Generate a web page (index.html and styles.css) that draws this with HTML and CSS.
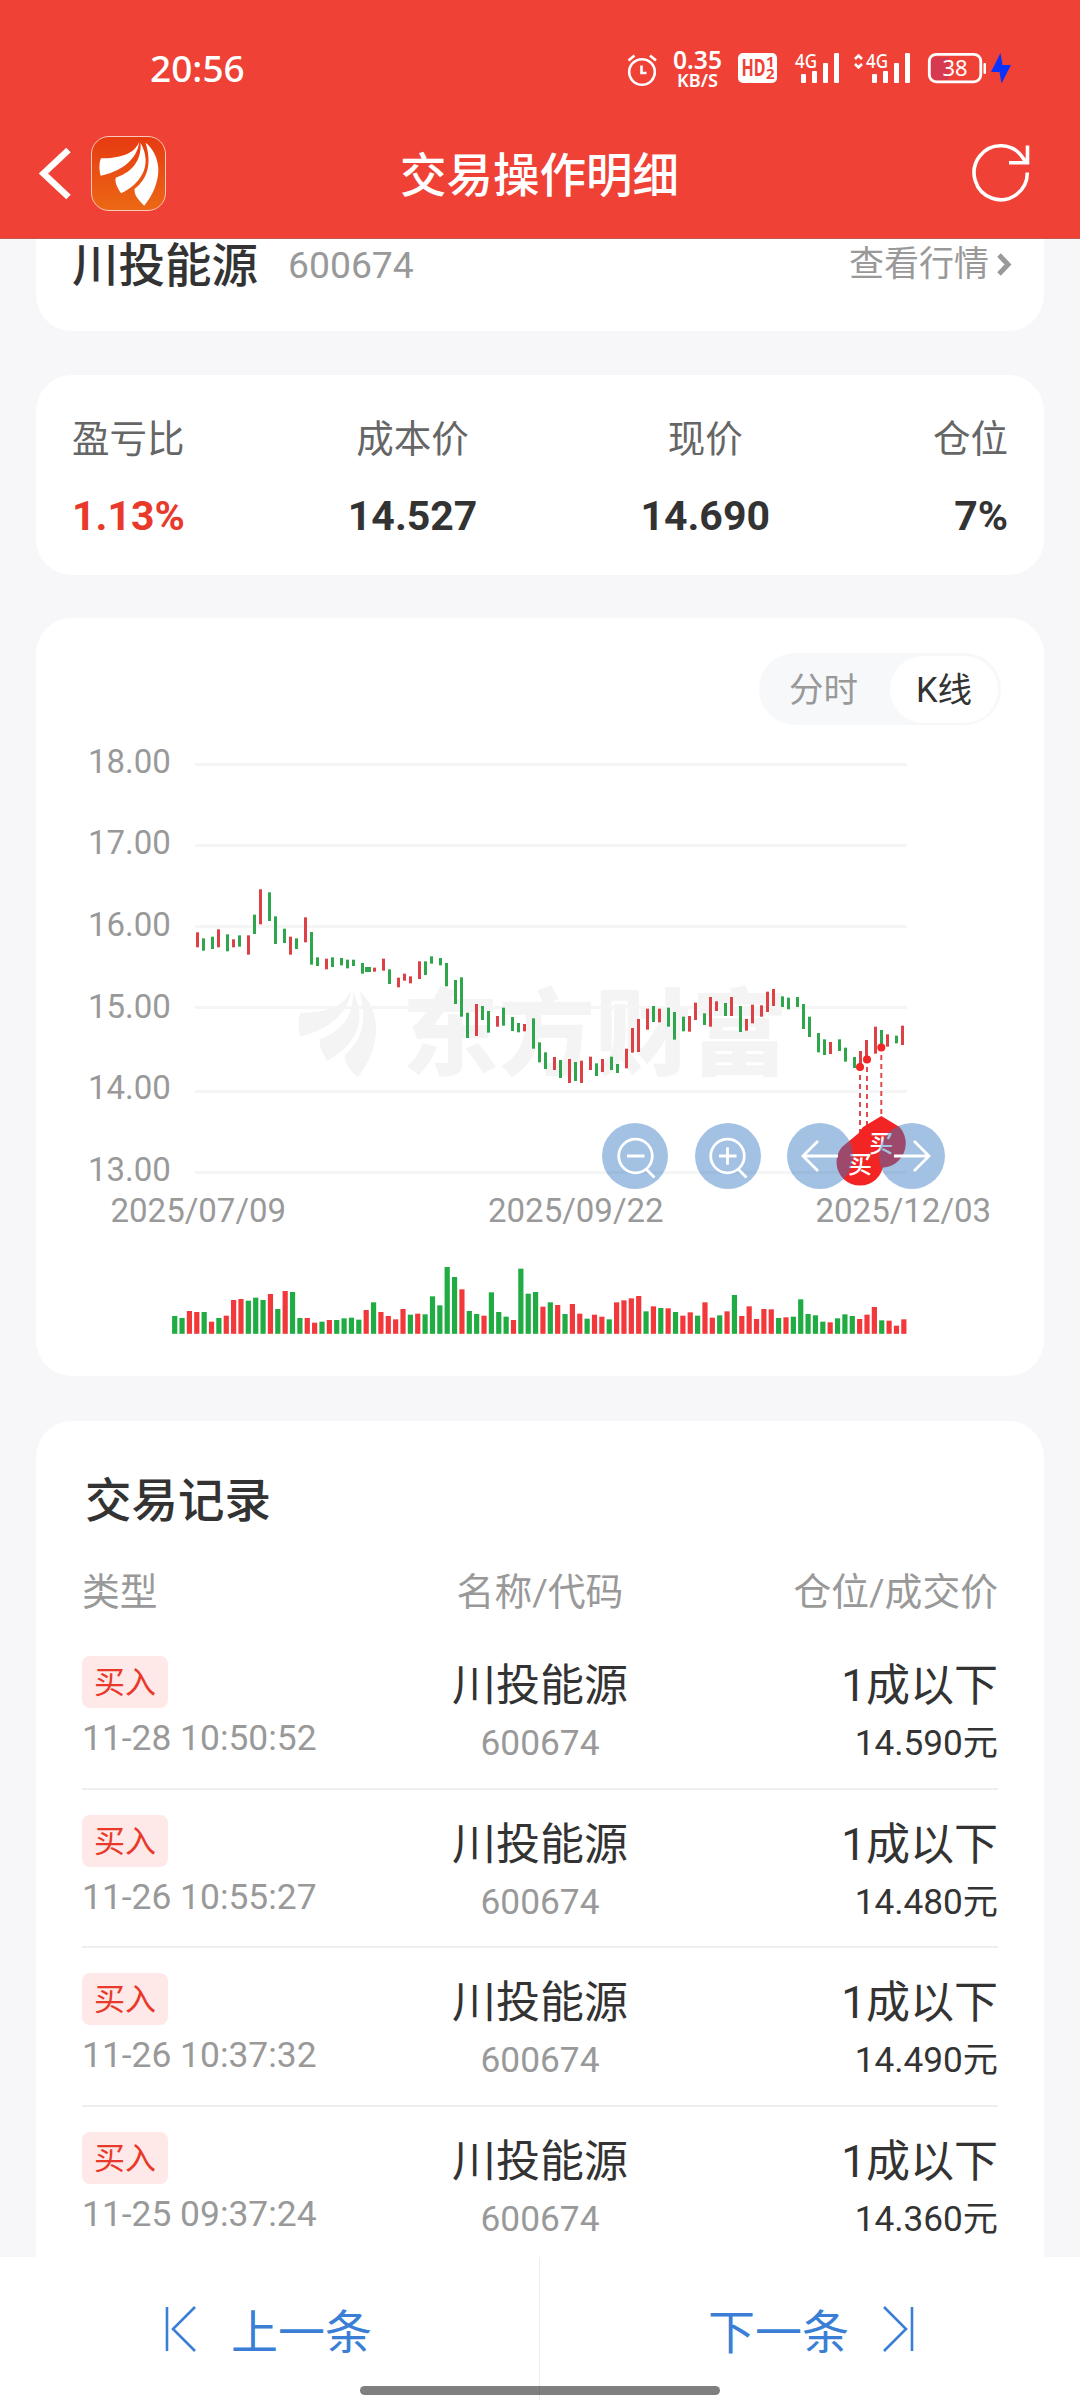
FILE: index.html
```html
<!DOCTYPE html>
<html lang="zh-CN">
<head>
<meta charset="utf-8">
<title>交易操作明细</title>
<link rel="stylesheet" href="styles.css">
</head>
<body>
<svg class="defs" width="0" height="0" aria-hidden="true">
  <symbol id="logo" viewBox="204 28 179 195" preserveAspectRatio="none">
    <path d="M324 30C308 70 262 79 210 80C204 92 204 115 209 132C262 121 318 88 324 30Z"/>
    <path d="M328 33C332 95 292 125 254 138C250 152 260 170 270 185C330 155 365 100 328 33Z"/>
    <path d="M343 33C362 95 350 140 310 172C308 192 325 208 339 222C365 190 382 150 381 112C380 80 365 50 343 33Z"/>
  </symbol>
</svg>

<header class="header">
  <div class="status">
    <span class="clock">20:56</span>
    <svg class="status-icons" width="390" height="66" viewBox="624 34 390 66">
      <g fill="none" stroke="#fff" stroke-width="2.6">
        <circle cx="642" cy="72" r="12.8"/>
        <path d="M641.5 65.500v7.5h5M628.5 60.500l6-5M650 55.500l6 5"/>
      </g>
      <text class="st-speed" x="697.5" y="68.5" textLength="49" lengthAdjust="spacingAndGlyphs">0.35</text>
      <text class="st-unit" x="697.5" y="86.5" textLength="41" lengthAdjust="spacingAndGlyphs">KB/S</text>
      <rect x="738" y="53" width="39" height="30" rx="5" fill="#fff"/>
      <text class="st-hd" x="741.5" y="76" textLength="24" lengthAdjust="spacingAndGlyphs">HD</text>
      <text class="st-sub" x="766" y="67">1</text>
      <text class="st-sub" x="766" y="78.5">2</text>
      <text class="st-net" x="795" y="67.5" textLength="22" lengthAdjust="spacingAndGlyphs">4G</text>
      <text class="st-net" x="866" y="67.5" textLength="22" lengthAdjust="spacingAndGlyphs">4G</text>
      <g fill="#fff">
        <rect x="801" y="74" width="5" height="9" rx="1"/><rect x="812" y="71" width="5" height="12" rx="1"/>
        <rect x="823" y="63" width="5" height="20" rx="1"/><rect x="834" y="53" width="5" height="30" rx="1"/>
        <rect x="872" y="74" width="5" height="9" rx="1"/><rect x="883" y="71" width="5" height="12" rx="1"/>
        <rect x="894" y="63" width="5" height="20" rx="1"/><rect x="905" y="53" width="5" height="30" rx="1"/>
        <rect x="983.5" y="63" width="2.5" height="11" rx="1"/>
      </g>
      <path d="M855 59l3.5-3.5 3.5 3.5M855 64l3.5 3.5 3.5-3.5" fill="none" stroke="#fff" stroke-width="2.6"/>
      <path d="M936 57h13v23h-13q-5 0-5-5v-13q0-5 5-5z" fill="#d63a50"/>
      <rect x="929.3" y="54.3" width="51.5" height="27.5" rx="7" fill="none" stroke="#fff" stroke-width="2.8"/>
      <text class="st-bat" x="955" y="76">38</text>
      <path d="M1000.5 53l-9.5 19h8.5l2 11.500 9.500-18.500h-8.500z" fill="#0a32ff"/>
    </svg>
  </div>
  <nav class="nav">
    <div class="nav-left">
      <svg width="34" height="60" viewBox="39 143 34 60"><path d="M68.500 150L43.500 173.500 68.500 197" fill="none" stroke="#fff" stroke-width="6.500"/></svg>
      <span class="app-icon"><svg width="60" height="65"><use href="#logo"/></svg></span>
    </div>
    <h1 class="nav-title">交易操作明细</h1>
    <svg class="refresh" width="62" height="62" viewBox="970 142 62 62"><path d="M1027.300 172.500A26.600 27 0 1 1 1023 158L1026 162.500M1009 162.800H1027.500V145.500" fill="none" stroke="#fff" stroke-width="3.600"/></svg>
  </nav>
</header>

<main class="main">
  <section class="card stock">
    <h2 class="stock-name">川投能源</h2>
    <span class="stock-code">600674</span>
    <a class="stock-link">查看行情<svg width="18" height="26" viewBox="0 0 18 26"><path d="M4 3l9 9.500-9 9.500" fill="none" stroke="#999" stroke-width="5"/></svg></a>
  </section>

  <section class="card metrics">
    <div class="metric"><span class="metric-label">盈亏比</span><b class="metric-value up">1.13%</b></div>
    <div class="metric mid"><span class="metric-label">成本价</span><b class="metric-value">14.527</b></div>
    <div class="metric mid"><span class="metric-label">现价</span><b class="metric-value">14.690</b></div>
    <div class="metric end"><span class="metric-label">仓位</span><b class="metric-value">7%</b></div>
  </section>

  <section class="card chart-card">
    <div class="toggle"><span class="tab">分时</span><span class="tab active">K线</span></div>
    <svg class="chart" width="1008" height="651" viewBox="36 725 1008 651">
      <g fill="#f4f4f4">
        <use href="#logo" x="298" y="989" width="79" height="89"/>
        <text class="watermark" x="402" y="1068" textLength="386" lengthAdjust="spacingAndGlyphs">东方财富</text>
      </g>
      <g stroke="#f5f5f5" stroke-width="3"><path d="M195 764.500H907M195 845.500H907M195 926.500H907M195 1007.500H907M195 1091.500H907M195 1172.500H907"/></g>
      <g class="axis">
        <text x="88" y="772.500">18.00</text><text x="88" y="853.500">17.00</text><text x="88" y="935.500">16.00</text>
        <text x="88" y="1017.500">15.00</text><text x="88" y="1098.500">14.00</text><text x="88" y="1180.500">13.00</text>
        <g><text x="110.500" y="1221.500">2025/07/09</text><text x="488" y="1221.500">2025/09/22</text><text x="815.500" y="1221.500">2025/12/03</text></g>
      </g>
      <g id="candles"></g>
      <g id="volumes"></g>
      <g stroke="#e04a4a" stroke-width="2" stroke-dasharray="5 4"><path d="M860 1075V1140M867 1067V1130M881.300 1055V1116"/></g>
      <g fill="#f22424">
        <circle cx="860" cy="1067" r="4"/><circle cx="867" cy="1059.500" r="4"/><circle cx="881.300" cy="1047.500" r="4"/>
        <path d="M860 1132L842 1147A23.500 23.500 0 1 0 878 1147Z"/>
        <path d="M881.300 1116L863 1127A24.500 24.500 0 1 0 899.500 1127Z"/>
      </g>
      <g class="pin"><text x="860" y="1173">买</text><text x="881.300" y="1152">买</text></g>
      <g fill="#3577c1" fill-opacity=".455">
        <circle cx="635" cy="1156" r="33"/><circle cx="728" cy="1156" r="33"/><circle cx="820" cy="1156" r="33"/><circle cx="912" cy="1156" r="33"/>
      </g>
      <g fill="none" stroke="#fff" stroke-width="2.800">
        <circle cx="635.500" cy="1156" r="16.800"/><path d="M627 1156h17.500M646.500 1169.500l8 8"/>
        <circle cx="727.500" cy="1156" r="16.800"/><path d="M719 1156h17.500M727.500 1147.300v17.500M738.500 1169.500l8 8"/>
        <path d="M838 1156H803M818 1141l-15 15 15 15M894 1156h35M914 1141l15 15-15 15"/>
      </g>
    </svg>
  </section>

  <section class="card records">
    <h2 class="records-title">交易记录</h2>
    <div class="row head"><span>类型</span><span>名称/代码</span><span>仓位/成交价</span></div>
    <div class="row item">
      <div><span class="tag">买入</span><span class="time">11-28 10:50:52</span></div>
      <div><span class="main-text">川投能源</span><span class="code">600674</span></div>
      <div><span class="main-text">1成以下</span><span class="price">14.590元</span></div>
    </div>
    <div class="row item">
      <div><span class="tag">买入</span><span class="time">11-26 10:55:27</span></div>
      <div><span class="main-text">川投能源</span><span class="code">600674</span></div>
      <div><span class="main-text">1成以下</span><span class="price">14.480元</span></div>
    </div>
    <div class="row item">
      <div><span class="tag">买入</span><span class="time">11-26 10:37:32</span></div>
      <div><span class="main-text">川投能源</span><span class="code">600674</span></div>
      <div><span class="main-text">1成以下</span><span class="price">14.490元</span></div>
    </div>
    <div class="row item">
      <div><span class="tag">买入</span><span class="time">11-25 09:37:24</span></div>
      <div><span class="main-text">川投能源</span><span class="code">600674</span></div>
      <div><span class="main-text">1成以下</span><span class="price">14.360元</span></div>
    </div>
  </section>
</main>

<footer class="footer">
  <a class="pager prev"><svg width="34" height="48" viewBox="0 0 34 48"><path d="M3 2v44M31 2L9 24l22 22" fill="none" stroke="#3a7fd5" stroke-width="2.600"/></svg>上一条</a>
  <a class="pager next">下一条<svg width="34" height="48" viewBox="0 0 34 48"><path d="M31 2v44M3 2l22 22L3 46" fill="none" stroke="#3a7fd5" stroke-width="2.600"/></svg></a>
  <i class="home-bar"></i>
</footer>
<script src="chart.js"></script>
</body>
</html>
```
FILE: styles.css
```css
* { box-sizing: border-box; margin: 0; padding: 0; }
body {
  width: 1080px; height: 2400px; overflow: hidden;
  display: flex; flex-direction: column;
  background: #f7f7fa; color: #333;
  font-family: Roboto, "Noto Sans CJK SC", sans-serif;
}
svg { display: block; }
.defs { position: absolute; }

.header { height: 239px; flex: none; background: #ef4136; color: #fff; border-bottom: 1px solid #c25a50; }
.status { height: 135px; padding: 34px 66px 0 150px; display: flex; justify-content: space-between; align-items: flex-start; }
.clock { font: 500 37px/50px "Noto Sans", sans-serif; margin-top: 9px; }
.status-icons text { fill: #fff; font-family: "Noto Sans", sans-serif; font-weight: 600; }
.status-icons .st-speed { font-size: 25px; text-anchor: middle; }
.status-icons .st-unit { font-size: 18px; text-anchor: middle; }
.status-icons .st-hd { font-size: 24px; font-weight: 700; fill: #ef4136; }
.status-icons .st-sub { font-size: 15px; font-weight: 700; fill: #ef4136; }
.status-icons .st-net { font-size: 20px; font-weight: 500; }
.status-icons .st-bat { font-size: 22px; font-weight: 400; text-anchor: middle; }
.nav { height: 75px; padding: 0 48px 0 39px; display: grid; grid-template-columns: 1fr auto 1fr; align-items: center; }
.nav-left { display: flex; align-items: center; gap: 18px; }
.app-icon {
  width: 75px; height: 75px; border: 1px solid #f8c9b8; border-radius: 18px;
  background: linear-gradient(#e63a12, #ec6814); fill: #fff;
  display: flex; align-items: center; justify-content: center;
}
.nav-title { font-size: 46.5px; line-height: 70px; font-weight: 500; padding-top: 6px; margin-left: 8px; }
.refresh { justify-self: end; }

.main { flex: 1; min-height: 0; overflow: hidden; padding: 0 36px; display: flex; flex-direction: column; gap: 44px; }
.card { background: #fff; border-radius: 36px; flex: none; }
.stock { height: 92px; border-radius: 0 0 36px 36px; padding: 1px 31px 0 36px; display: flex; align-items: flex-start; }
.stock-name { font-size: 46.5px; line-height: 52px; font-weight: 500; }
.stock-code { font-size: 37.3px; line-height: 51px; color: #999; margin-left: 30px; }
.stock-link { margin-left: auto; display: flex; align-items: center; gap: 6px; font-size: 35px; line-height: 50px; color: #999; }

.metrics { height: 200px; padding: 35px 36px; display: flex; justify-content: space-between; }
.metric { display: flex; flex-direction: column; }
.metric.mid { align-items: center; }
.metric.end { align-items: flex-end; }
.metric-label { font-size: 37.5px; line-height: 58px; color: #666; }
.metric-value { font-size: 41px; line-height: 60px; font-weight: 700; margin-top: 18px; }
.up { color: #e8392a; }

.chart-card { height: 758px; padding-top: 35px; display: flex; flex-direction: column; margin-top: -1px; }
.toggle { align-self: flex-end; margin-right: 43px; width: 242px; height: 72px; padding: 3px; border-radius: 36px; background: #f6f8fa; display: flex; }
.tab { flex: 1; text-align: center; font-size: 34.500px; line-height: 69px; color: #999; padding-right: 5px; }
.tab.active { flex: none; width: 108px; border-radius: 34px; background: #fff; color: #333; padding-right: 0; height: 67px; }
.chart text { font-family: Roboto, "Noto Sans CJK SC", sans-serif; }
.axis text { font-size: 33px; fill: #999; }
.chart .watermark { font-family: "Noto Sans CJK SC", sans-serif; font-size: 94px; font-weight: 900; }
.chart .pin text { font-size: 24px; font-weight: 500; fill: #fff; text-anchor: middle; }

.records { height: 1000px; padding: 45px 46px 0; margin-top: 1px; }
.records-title { font-size: 46.5px; line-height: 70px; font-weight: 500; padding-left: 3px; }
.row { display: grid; grid-template-columns: 1fr 1fr 1fr; }
.row > :nth-child(2) { text-align: center; }
.row > :nth-child(3) { text-align: right; }
.head { font-size: 37.8px; line-height: 60px; color: #999; margin-top: 26px; }
.item { height: 158.700px; padding-top: 25px; border-bottom: 2px solid #eee; }
.head + .item { margin-top: 9px; }
.item > div { display: flex; flex-direction: column; align-items: center; }
.item > :first-child { align-items: flex-start; }
.item > :last-child { align-items: flex-end; }
.tag { width: 86px; height: 52px; border-radius: 8px; background: #ffe9e8; color: #e8392a; font-size: 31px; line-height: 53px; text-align: center; }
.time { font-size: 35.400px; line-height: 50px; color: #999; margin-top: 5px; }
.main-text { font-size: 44px; line-height: 58px; padding-top: 1px; }
.code { font-size: 35.300px; line-height: 50px; color: #999; margin-top: 3px; }
.price { font-size: 35.200px; line-height: 50px; margin-top: 3px; }

.footer { position: relative; flex: none; height: 143px; background: #fff; display: flex; z-index: 1; }
.pager { flex: 1; display: flex; align-items: flex-start; padding-top: 48px; gap: 33px; color: #3a7fd5; font-size: 47px; line-height: 55px; }
.prev { padding-left: 164px; border-right: 1px solid #eee; }
.next { padding-right: 165px; justify-content: flex-end; gap: 32px; }
.home-bar { position: absolute; left: 360px; top: 129px; width: 360px; height: 9px; border-radius: 5px; background: rgba(0, 0, 0, .5); }
```
FILE: chart.js
```js
// Daily candles: colour, top, bottom (in thirds of a pixel below y=730).
const candles = `r607-652 g625-662 g620-657 r598-652 g613-664 r628-652 g616-650 r616-674 g554-612 r478-583
g487-573 g559-642 g596-639 r620-674 g625-657 r562-637 g606-704 g682-708 r686-718 g682-711
g684-706 g689-715 g689-708 g699-731 g711-726 r713-725 r686-722 g718-762 r743-772 r731-752
r739-760 r694-747 g694-735 g679-701 g684-706 g699-769 g750-822 g742-860 g848-924 r822-918
g828-870 g843-908 r858-890 g833-887 g861-903 g879-907 r882-904 g865-956 g937-997 g967-1017
r981-1020 g990-1044 r987-1059 g996-1053 r992-1059 r980-1020 g1000-1038 r987-1026 g980-1020 g1002-1029
r956-1015 r894-968 r867-966 r836-899 g828-876 r836-877 g833-890 g846-929 g860-904 r858-905
r818-870 g850-885 r801-890 r814-843 g819-858 r801-858 g828-906 r867-902 r824-880 r826-860
r785-846 r777-828 g799-831 g803-838 g801-831 g822-897 g860-921 g909-967 g928-975 r936-972
g928-963 g953-995 g981-1014 r963-1002 r930-985 r890-971 g900-945 r913-950 g917-940 r887-945`.split(/\s+/);
// Daily volumes: colour, top (in thirds of a pixel below y=1250).
const volumes = `g198 g204 r183 r186 g186 r215 g204 r197 r150 r147 g152 g143 g150 r132 g177 r123 g126 g204 r204 r218
g215 r210 g210 g205 g203 g209 r180 g157 r186 r198 r208 r177 g194 r191 g193 g139 g166 g51 g81 r118
g183 g192 r197 g127 g186 g200 r210 g56 g131 g126 r170 g157 r165 g192 r162 r191 g206 r194 r200 g208
r157 r151 r145 r138 g184 r169 g174 r175 g186 r197 r187 g197 r157 r203 g196 r184 g135 r198 r169 r207
r177 r178 g204 r202 g200 g148 g192 g196 g215 r217 g205 g193 g198 r207 r194 r171 g211 r212 r227 r208`.split(/\s+/);

function bar(group, x, y, w, h, fill) {
  const r = document.createElementNS("http://www.w3.org/2000/svg", "rect");
  for (const [k, v] of Object.entries({ x, y, width: w, height: h, fill })) r.setAttribute(k, v);
  document.getElementById(group).appendChild(r);
}
candles.forEach((c, i) => {
  const [top, bottom] = c.slice(1).split("-").map(Number);
  const x = 196 + 3 * Math.round(i * 2.376);
  const wide = i === 24;
  bar("candles", wide ? x - 2 : x, 730 + top / 3, wide ? 6 : 3, (bottom - top) / 3, c[0] === "r" ? "#dc4145" : "#2fa64b");
});
volumes.forEach((v, i) => {
  const top = 1250 + v.slice(1) / 3;
  bar("volumes", 172.1 + i * 7.365, top, 5.2, 1333.8 - top, v[0] === "r" ? "#f3383c" : "#20ac42");
});
```
